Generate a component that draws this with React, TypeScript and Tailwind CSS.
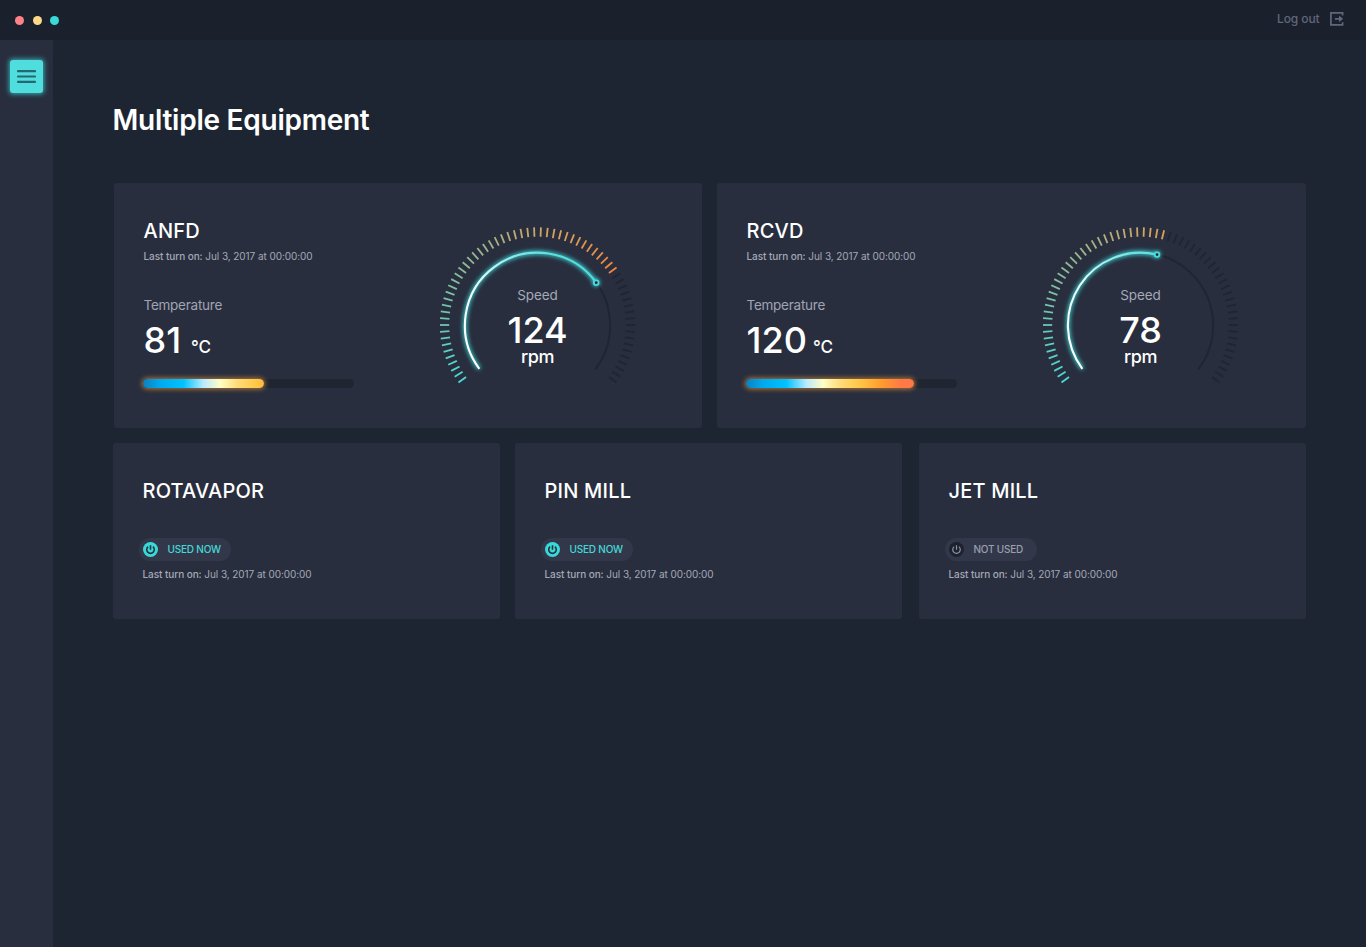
import React from "react";

type Unit = { name: string; temp: number; bar: number; rpm: number; lit: number; angle: number; gap: string };

const units: Unit[] = [
  { name: "ANFD", temp: 81, bar: 121, rpm: 124, lit: 46, angle: 54, gap: "ml-[10px]" },
  { name: "RCVD", temp: 120, bar: 168, rpm: 78, lit: 36, angle: 13.2, gap: "ml-[6px]" },
];

const small = [
  { name: "ROTAVAPOR", used: true },
  { name: "PIN MILL", used: true },
  { name: "JET MILL", used: false },
];

const TICKS = 64;
const STEP = 4;
const CX = 97.5;
const CY = 142.3;
const R = 72.6;
const START = -126.8;

function mix(a: number[], b: number[], t: number) {
  return a.map((v, i) => Math.round(v + (b[i] - v) * t));
}

function tickColor(i: number) {
  const stops = [[74, 217, 214], [112, 196, 174], [160, 180, 138], [212, 163, 96], [243, 133, 62]];
  const p = Math.min(3.999, (i / 45) * 4);
  const k = Math.floor(p);
  return `rgb(${mix(stops[k], stops[k + 1], p - k).join(",")})`;
}

function point(deg: number) {
  const a = (deg * Math.PI) / 180;
  return [CX + R * Math.sin(a), CY - R * Math.cos(a)];
}

function arc(end: number) {
  const large = end - START > 180 ? 1 : 0;
  return `M${point(START).join(" ")}A${R} ${R} 0 ${large} 1 ${point(end).join(" ")}`;
}

function Gauge({ unit }: { unit: Unit }) {
  const id = unit.name;
  const [ex, ey] = point(unit.angle);
  return (
    <div className="relative h-[210px] w-[200px] shrink-0">
      <svg width="200" height="210" viewBox="0 0 200 210" fill="none">
        <defs>
          <linearGradient id={`arc${id}`} x1="40" y1="180" x2="150" y2="85" gradientUnits="userSpaceOnUse">
            <stop offset="0" stopColor="#ffffff" />
            <stop offset="0.38" stopColor="#e4fbfb" />
            <stop offset="0.75" stopColor="#70e3e2" />
            <stop offset="1" stopColor="#4edbdb" />
          </linearGradient>
          <filter id={`glow${id}`} x="0" y="0" width="200" height="210" filterUnits="userSpaceOnUse">
            <feGaussianBlur stdDeviation="2.2" />
          </filter>
        </defs>
        {Array.from({ length: TICKS }, (_, i) => (
          <line
            key={i}
            x1={CX}
            x2={CX}
            y1={44.3}
            y2={53.7}
            stroke={i < unit.lit ? tickColor(i) : "#1f2531"}
            strokeWidth="1.8"
            transform={`rotate(${(i - (TICKS - 1) / 2) * STEP} ${CX} 142)`}
          />
        ))}
        <path d={arc(127.4)} stroke="#1f2531" strokeWidth="2" />
        <path d={arc(unit.angle)} stroke="#3bdcdc" strokeWidth="3.6" filter={`url(#glow${id})`} />
        <path d={arc(unit.angle)} stroke={`url(#arc${id})`} strokeWidth="2.1" />
        <circle cx={ex} cy={ey} r="3.4" fill="#3bdcdc" filter={`url(#glow${id})`} />
        <circle cx={ex} cy={ey} r="2.3" fill="#1e2531" stroke="#4adada" strokeWidth="1.8" />
      </svg>
      <div className="absolute inset-x-0 top-[103px] flex flex-col items-center pr-[5px]">
        <span className="text-[13.5px] leading-[18px] tracking-[-0.1px] text-[#a5a9b8]">Speed</span>
        <span className="mt-[9px] text-[36px] leading-[34px] font-medium tracking-[-0.1px]">{unit.rpm}</span>
        <span className="text-[18px] leading-[20px] font-medium tracking-[-0.4px]">rpm</span>
      </div>
    </div>
  );
}

function LastOn() {
  return (
    <p className="text-[10px] leading-[14px] tracking-[-0.07px] whitespace-nowrap text-[#a5a9b6]">
      <span className="font-medium">Last turn on:</span> Jul 3, 2017 at 00:00:00
    </p>
  );
}

function BigCard({ unit }: { unit: Unit }) {
  return (
    <section className="flex h-[245px] rounded-[3px] bg-[#282e3e] pl-[30px]">
      <div className="w-[296px] shrink-0 pt-[34px]">
        <h2 className="ml-[-0.5px] text-[20px] leading-[28px] font-medium tracking-[0.2px]">{unit.name}</h2>
        <div className="mt-[4px] ml-[-0.5px]"><LastOn /></div>
        <p className="mt-[32px] ml-[-0.5px] text-[13.5px] leading-[20px] tracking-[-0.25px] text-[#a0a4b3]">Temperature</p>
        <p className="mt-[3px] ml-[-0.5px] flex items-baseline text-[36px] leading-[44px] font-medium">
          {unit.temp}
          <span className={`text-[17px] font-medium ${unit.gap}`}>℃</span>
        </p>
        <div className="mt-[10px] ml-[-1px] h-[9px] w-[211px] rounded-full bg-[#1f2531]">
          <div className="h-[9px] overflow-hidden rounded-full shadow-[0_0_5px_1px_rgba(255,160,50,0.65)]" style={{ width: unit.bar }}>
            <div className="h-[9px] w-[168px] bg-[linear-gradient(90deg,#0f80bd_0%,#00a9ef_10%,#00c2ff_24%,#b8eaff_36%,#fffec5_46%,#ffdc78_56%,#ffc84b_67%,#ff9e2c_80%,#ff7848_93%,#ff7848_100%)]" />
          </div>
        </div>
      </div>
      <Gauge unit={unit} />
    </section>
  );
}

function Power({ used }: { used: boolean }) {
  return (
    <svg width="15" height="15" viewBox="0 0 15 15" fill="none">
      <circle cx="7.5" cy="7.5" r="7.5" fill={used ? "#38d9d9" : "#1c222e"} />
      <path d="M5.1 4.6A3.8 3.8 0 1 0 9.9 4.6M7.5 3.2V7.8" stroke={used ? "#28303f" : "#8f94a5"} strokeWidth={used ? 1.6 : 1.2} />
    </svg>
  );
}

export default function App() {
  return (
    <div className="flex h-[947px] w-[1366px] flex-col overflow-hidden bg-[#1e2532] font-['Inter',sans-serif] text-white">
      <header className="flex h-[40px] shrink-0 items-center justify-between bg-[#1b212c] pr-[22px] pl-[15px]">
        <div className="flex gap-[8.5px]">
          <i className="size-[9px] rounded-full bg-[#ff8288]" />
          <i className="size-[9px] rounded-full bg-[#ffd98a]" />
          <i className="size-[9px] rounded-full bg-[#38d9d9]" />
        </div>
        <button className="flex items-center gap-[10.5px] text-[12px] leading-[16px] font-medium text-[#60677b]">
          <span className="mt-[-2px] tracking-[-0.1px]">Log out</span>
          <svg className="mt-[-2px]" width="14" height="14" viewBox="0 0 14 14" fill="none" stroke="currentColor" strokeWidth="1.7">
            <path d="M12.6 3.4V0.9H0.9V12.8H12.6V10.3M5 6.8H12" />
            <path d="M9 3.4L13.1 6.8L9 10.2Z" fill="currentColor" stroke="none" />
          </svg>
        </button>
      </header>
      <div className="flex min-h-0 flex-1">
        <aside className="w-[53px] shrink-0 bg-[#282e3e] pt-[20px] pl-[10px]">
          <button className="flex size-[33px] items-center justify-center rounded-[3px] bg-[#4fdddd] shadow-[0_0_5px_1px_rgba(62,218,218,0.75)]">
            <svg width="19" height="13" viewBox="0 0 19 13" stroke="#23696f" strokeWidth="2.2" strokeLinecap="round">
              <path d="M1 1.2H18M1 6.5H18M1 11.8H18" />
            </svg>
          </button>
        </aside>
        <main className="flex-1 pt-[62px] pr-[60px] pl-[60px]">
          <h1 className="ml-[-0.5px] text-[28px] leading-[36px] font-semibold tracking-[-0.25px]">Multiple Equipment</h1>
          <div className="mt-[45px] ml-[1px] grid grid-cols-[588px_589px] gap-[15px]">
            {units.map((u) => <BigCard key={u.name} unit={u} />)}
          </div>
          <div className="mt-[15px] flex">
            {small.map((s, i) => (
              <section key={s.name} className={`h-[176px] w-[387px] shrink-0 rounded-[3px] bg-[#282e3e] pt-[34px] pl-[30px] ${i === 1 ? "ml-[15px]" : i === 2 ? "ml-[17px]" : ""}`}>
                <h2 className="ml-[-0.5px] text-[20px] leading-[28px] font-medium tracking-[0.2px]">{s.name}</h2>
                <div className="mt-[33px] ml-[-4px] flex h-[23px] w-[92px] items-center gap-[9.5px] rounded-full bg-[#32384a] pl-[4px]">
                  <Power used={s.used} />
                  <span className={`text-[10px] font-medium tracking-[-0.2px] whitespace-nowrap ${s.used ? "text-[#45d8d8]" : "text-[#9a9fae]"}`}>{s.used ? "USED NOW" : "NOT USED"}</span>
                </div>
                <div className="mt-[6px] ml-[-0.5px]"><LastOn /></div>
              </section>
            ))}
          </div>
        </main>
      </div>
    </div>
  );
}
